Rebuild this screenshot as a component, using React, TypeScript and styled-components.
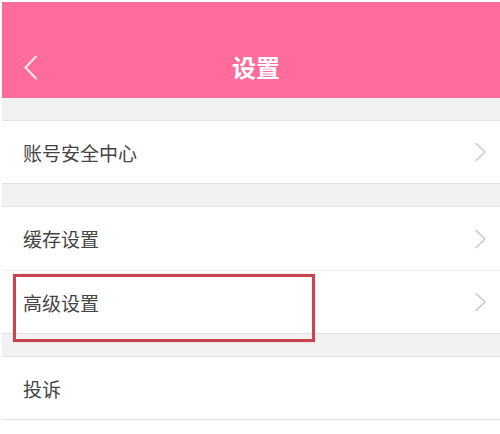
import React from "react";
import styled, { createGlobalStyle } from "styled-components";

const GlobalStyle = createGlobalStyle`
  html, body {
    margin: 0;
    padding: 0;
    background: #ffffff;
  }
  body {
    font-family: "Noto Sans CJK SC", "Noto Sans", sans-serif;
  }
`;

interface Item {
  label: string;
  arrow: boolean;
  marked?: boolean;
}

const groups: Item[][] = [
  [{ label: "账号安全中心", arrow: true }],
  [
    { label: "缓存设置", arrow: true },
    { label: "高级设置", arrow: true, marked: true },
  ],
  [{ label: "投诉", arrow: false }],
];

const BackIcon = () => (
  <svg width="16" height="25" viewBox="0 0 16 25">
    <polyline
      points="13,1.5 2.5,12.5 13,23.5"
      fill="none"
      stroke="rgba(255,255,255,0.85)"
      strokeWidth="2"
      strokeLinecap="round"
      strokeLinejoin="round"
    />
  </svg>
);

const ArrowIcon = () => (
  <svg width="13" height="20" viewBox="0 0 13 20">
    <polyline
      points="2,1.5 11,10 2,18.5"
      fill="none"
      stroke="#c9c9c9"
      strokeWidth="1.6"
      strokeLinecap="round"
      strokeLinejoin="round"
    />
  </svg>
);

const App: React.FC = () => {
  return (
    <Frame>
      <GlobalStyle />
      <Header>
        <NavBar>
          <BackButton>
            <BackIcon />
          </BackButton>
          <Title>设置</Title>
        </NavBar>
      </Header>
      <List>
        {groups.map((group, gi) => (
          <Group key={gi}>
            {group.map((item, ii) => (
              <Row key={ii} $last={ii === group.length - 1}>
                <Label>{item.label}</Label>
                {item.arrow && <ArrowIcon />}
                {item.marked && <Highlight />}
              </Row>
            ))}
          </Group>
        ))}
        <Filler />
      </List>
    </Frame>
  );
};

const Frame = styled.div`
  padding: 2px 0 0 2px;
  width: 500px;
  height: 434px;
  box-sizing: border-box;
  background: #ffffff;
  overflow: hidden;
  display: flex;
  flex-direction: column;
`;

const Header = styled.header`
  flex: none;
  height: 96px;
  background-color: #ff6b9b;
  display: flex;
  align-items: flex-end;
`;

const NavBar = styled.div`
  position: relative;
  flex: 1;
  height: 62px;
  display: flex;
  align-items: center;
  justify-content: center;
  padding-left: 10px;
`;

const BackButton = styled.div`
  position: absolute;
  left: 21px;
  top: 19px;
  display: flex;
`;

const Title = styled.h1`
  margin: 0;
  color: #ffffff;
  font-size: 24px;
  font-weight: 700;
  line-height: 1;
`;

const List = styled.main`
  flex: 1;
  display: flex;
  flex-direction: column;
  background: #f2f2f2;
`;

const Group = styled.section`
  margin-top: 22px;
  background: #ffffff;
  border-top: 1px solid #e4e4e4;
  border-bottom: 1px solid #e2e2e2;
`;

const Filler = styled.div`
  flex: 1;
  background: #ffffff;
`;

const Row = styled.div<{ $last: boolean }>`
  position: relative;
  height: ${({ $last }) => ($last ? 62 : 63)}px;
  display: flex;
  align-items: center;
  justify-content: space-between;
  padding: 0 13px 0 21px;
  border-bottom: ${({ $last }) => ($last ? "none" : "1px solid #eeeeee")};
`;

const Label = styled.span`
  color: #444444;
  font-size: 19px;
  line-height: 1;
`;

const Highlight = styled.div`
  position: absolute;
  left: 11px;
  top: 3px;
  width: 302px;
  height: 68px;
  box-sizing: border-box;
  border: 3px solid #c8454f;
  box-shadow: 0 0 1px rgba(200, 69, 79, 0.5);
  pointer-events: none;
  z-index: 1;
`;

export default App;
